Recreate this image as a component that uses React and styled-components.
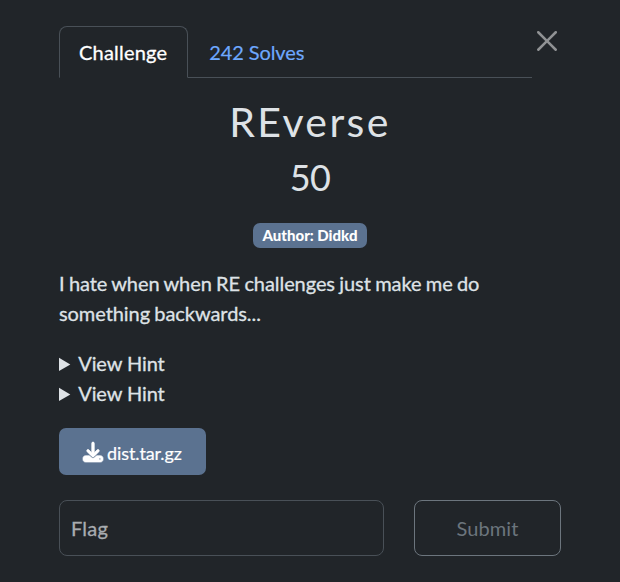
import React from "react";
import styled, { createGlobalStyle } from "styled-components";

const Global = createGlobalStyle`
  * { box-sizing: border-box; }
  body { margin: 0; background: #212529; color: #dee2e6; font: 400 20px/30px Lato, sans-serif; }
`;
const Modal = styled.main`
  height: 582px;
  padding: 26px 59px 0;
  background: #212529;
`;
const Header = styled.header`
  display: flex;
  align-items: flex-start;
  height: 52px;
`;
const Tabs = styled.nav`
  display: flex;
  width: 473px;
  height: 52px;
  border-bottom: 1px solid #495057;
`;
const Tab = styled.a`
  height: 52px;
  padding: 10px ${(p) => (p.$active ? "20px 0 19px" : "20px 0")};
  border: 1px solid;
  border-color: ${(p) => (p.$active ? "#495057 #495057 #212529" : "transparent")};
  border-bottom-width: ${(p) => (p.$active ? "1px" : "0")};
  border-radius: 8px 8px 0 0;
  background: ${(p) => (p.$active ? "#212529" : "transparent")};
  color: ${(p) => (p.$active ? "#fff" : "#6ea8fe")};
  letter-spacing: ${(p) => (p.$active ? "0.2px" : "-0.1px")};
  -webkit-text-stroke: ${(p) => (p.$active ? "0.3px" : "0.2px")};
`;
const Close = styled.button`
  display: flex;
  margin: 5px 0 0 5px;
  padding: 0;
  border: 0;
  background: none;
  color: #909294;
`;
const Title = styled.h2`
  margin: 19px 0 0;
  font-size: 41px;
  line-height: 50px;
  font-weight: 400;
  letter-spacing: 2.4px;
  text-align: center;
`;
const Points = styled.h3`
  margin: 8px 0 0;
  font-size: 36px;
  line-height: 45px;
  font-weight: 400;
  letter-spacing: -0.6px;
  text-align: center;
`;
const Tags = styled.div`
  display: flex;
  justify-content: center;
  margin-top: 23px;
`;
const Badge = styled.span`
  width: 114px;
  height: 25px;
  border-radius: 7px;
  background: #5b7290;
  color: #fff;
  font-size: 15px;
  line-height: 25px;
  font-weight: 900;
  text-align: center;
`;
const Description = styled.p`
  width: 450px;
  margin: 20px 0;
  letter-spacing: -0.07px;
  word-spacing: -0.7px;
  -webkit-text-stroke: 0.3px;
`;
const Hint = styled.details`
  height: 30px;
  letter-spacing: -0.1px;
  -webkit-text-stroke: 0.3px;
`;
const HintLabel = styled.span`
  margin-left: -2px;
`;
const Download = styled.a`
  display: flex;
  align-items: center;
  width: 147px;
  height: 47px;
  margin: 20px 0 25px;
  padding: 3px 0 0 24px;
  gap: 4px;
  border-radius: 7px;
  background: #5b7290;
  color: #fff;
  font-size: 18px;
  letter-spacing: -0.1px;
  -webkit-text-stroke: 0.2px;
`;
const DownloadIcon = styled.svg`
  width: 20px;
  height: 20px;
  margin-top: -2px;
  overflow: visible;
  fill: currentColor;
  stroke: currentColor;
  stroke-width: 18;
`;
const Form = styled.form`
  display: flex;
  gap: 30px;
`;
const Flag = styled.input`
  width: 325px;
  height: 56px;
  padding: 0 12px 0 11px;
  border: 1px solid #495057;
  border-radius: 8px;
  background: #212529;
  color: #dee2e6;
  font: inherit;
  letter-spacing: 0.2px;
  -webkit-text-stroke: 0.3px;
  &::placeholder { color: #a8acb0; opacity: 1; }
`;
const Submit = styled.button`
  width: 147px;
  height: 56px;
  padding: 0;
  border: 1px solid #6c757d;
  border-radius: 8px;
  background: transparent;
  color: #6c757d;
  font: inherit;
  letter-spacing: 0.1px;
`;

export default function App() {
  return (
    <>
      <Global />
      <Modal>
        <Header>
          <Tabs>
            <Tab $active>Challenge</Tab>
            <Tab>242 Solves</Tab>
          </Tabs>
          <Close aria-label="Close">
            <svg width="20" height="20" viewBox="0 0 16 16" fill="currentColor">
              <path d="M.293.293a1 1 0 0 1 1.414 0L8 6.586 14.293.293a1 1 0 1 1 1.414 1.414L9.414 8l6.293 6.293a1 1 0 0 1-1.414 1.414L8 9.414l-6.293 6.293a1 1 0 0 1-1.414-1.414L6.586 8 .293 1.707a1 1 0 0 1 0-1.414z" />
            </svg>
          </Close>
        </Header>
        <Title>REverse</Title>
        <Points>50</Points>
        <Tags><Badge>Author: Didkd</Badge></Tags>
        <Description>I hate when when RE challenges just make me do something backwards...</Description>
        <Hint><summary><HintLabel>View Hint</HintLabel></summary></Hint>
        <Hint><summary><HintLabel>View Hint</HintLabel></summary></Hint>
        <Download>
          <DownloadIcon viewBox="0 0 512 512">
            <path d="M288 32c0-17.700-14.300-32-32-32s-32 14.300-32 32V274.700l-73.400-73.400c-12.500-12.500-32.800-12.500-45.300 0s-12.500 32.800 0 45.300l128 128c12.500 12.500 32.800 12.500 45.300 0l128-128c12.500-12.500 12.500-32.800 0-45.300s-32.800-12.500-45.300 0L288 274.700V32zM64 352c-35.300 0-64 28.700-64 64v32c0 35.300 28.700 64 64 64H448c35.300 0 64-28.700 64-64V416c0-35.300-28.700-64-64-64H346.500l-45.300 45.300c-25 25-65.500 25-90.500 0L165.500 352H64zm368 56a24 24 0 1 1 0 48 24 24 0 1 1 0-48z" />
          </DownloadIcon>
          dist.tar.gz
        </Download>
        <Form>
          <Flag placeholder="Flag" />
          <Submit type="button">Submit</Submit>
        </Form>
      </Modal>
    </>
  );
}
